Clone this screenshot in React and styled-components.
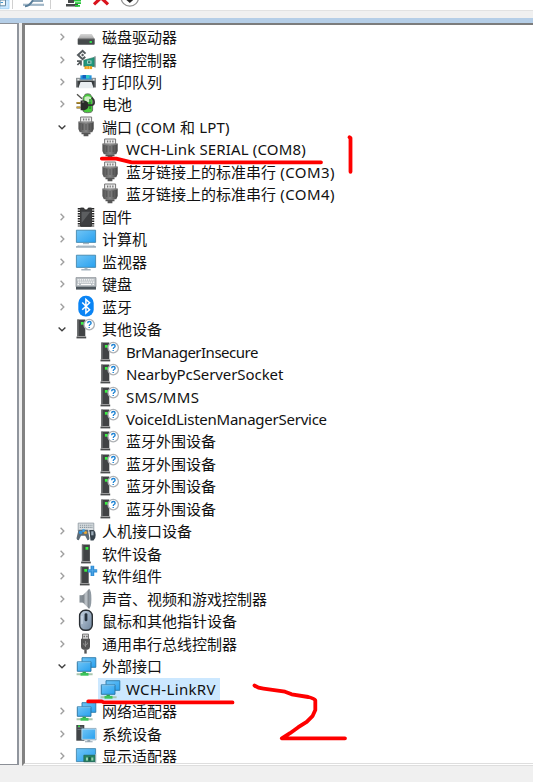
import React from 'react';
import styled, { createGlobalStyle } from 'styled-components';

const Global = createGlobalStyle`
  * { box-sizing: border-box; }
  body { margin: 0; background: #f0f0f0; }
`;

const Window = styled.div`
  position: relative;
  width: 533px;
  height: 782px;
  overflow: hidden;
  display: flex;
  flex-direction: column;
  background: #f0f0f0;
  font-family: 'Noto Sans', 'Noto Sans CJK SC', sans-serif;
  color: #111;
`;
const Toolbar = styled.div`
  height: 11px;
  flex: none;
  background: #fff;
  border-bottom: 1px solid #e2e2e2;
  overflow: hidden;
`;
const Strip = styled.div`
  height: 12px;
  flex: none;
  background: #f0f0f0;
  border-bottom: 5px solid #b5cee7;
`;
const Panes = styled.div`
  display: flex;
  height: 743px;
  flex: none;
  background: #f0f0f0;
`;
const SidePane = styled.div`
  width: 19px;
  height: 742px;
  background: #fff;
  border-top: 1px solid #8b8f96;
  border-right: 2px solid #90959d;
  border-bottom: 1px solid #8b8f96;
`;
const TreePane = styled.div`
  flex: 1;
  margin-left: 3px;
  height: 743px;
  background: #fff;
  border-left: 3px solid #828282;
  border-top: 2px solid #7c7c7c;
  border-bottom: 3px double #dedede;
  overflow: hidden;
  padding-top: 0.8px;
`;
const Row = styled.div`
  display: flex;
  align-items: center;
  height: 22.48px;
  padding-left: ${p => (p.$child ? 73 : 31)}px;
`;
const Chevron = styled.svg`
  width: 12px;
  height: 12px;
  flex: none;
  margin-right: 6px;
  fill: none;
  stroke: ${p => (p.$open ? '#404040' : '#a0a0a0')};
  stroke-width: 1.4;
`;
const Item = styled.div`
  display: flex;
  align-items: center;
  height: 22px;
  padding: 0 4px 0 1px;
  background: ${p => (p.$selected ? '#cce8ff' : 'transparent')};
`;
const Glyph = styled.svg`
  width: 22px;
  height: 22px;
  flex: none;
  margin-right: 5px;
  overflow: visible;
`;
const Label = styled.span`
  font-size: 15px;
  line-height: 22px;
  white-space: pre;
  font-family: 'Noto Sans CJK SC', sans-serif;
`;
const Latin = styled.span`
  font-family: 'Noto Sans', sans-serif;
  font-size: 15px;
  letter-spacing: ${p => p.$track || 0}px;
`;
const Ink = styled.svg`
  position: absolute;
  left: 0;
  top: 0;
  pointer-events: none;
  fill: none;
  stroke: #fe0000;
  stroke-width: 3.8;
  stroke-linecap: round;
  stroke-linejoin: round;
`;

const Defs = () => (
  <defs>
    <linearGradient id="screen" x1="0" y1="0" x2="1" y2="1">
      <stop offset="0" stopColor="#71c5f6" /><stop offset="1" stopColor="#27a0ef" />
    </linearGradient>
    <linearGradient id="metal" x1="0" y1="0" x2="1" y2="0">
      <stop offset="0" stopColor="#505050" /><stop offset=".5" stopColor="#858585" /><stop offset="1" stopColor="#444" />
    </linearGradient>
    <linearGradient id="cone" x1="0" y1="0" x2="1" y2="0">
      <stop offset="0" stopColor="#6e767d" /><stop offset=".5" stopColor="#c4cacf" /><stop offset="1" stopColor="#737b82" />
    </linearGradient>
    <linearGradient id="mouse" x1="0" y1="0" x2="1" y2="1">
      <stop offset="0" stopColor="#c5d3e2" /><stop offset="1" stopColor="#6e849c" />
    </linearGradient>
    <linearGradient id="lid" x1="0" y1="0" x2="0" y2="1">
      <stop offset="0" stopColor="#d8d8d8" /><stop offset="1" stopColor="#a5a5a5" />
    </linearGradient>
  </defs>
);

const Tower = ({ x = 1.5 }) => (
  <g transform={`translate(${x} 0)`}>
    <path d="M.8 1.5h8v17h-8z" fill="#414345" />
    <path d="M.8 1.5h1.4v17H.8z" fill="#6d6f70" />
    <path d="M0 18.6h9.7v1.8H0z" fill="#4b4d4e" />
    <path d="M1 18h7.6v.7H1z" fill="#aaa" />
    <path d="M4.4 4h2.8v2.7H4.4z" fill="#39f043" />
  </g>
);

const TwoScreens = () => (
  <g>
    <path d="M7 2.7h13.8v9.6H7z" fill="url(#screen)" stroke="#2878a8" strokeWidth=".9" />
    <path d="M2.3 6.8H16v9.5H2.3z" fill="url(#screen)" stroke="#286f9d" strokeWidth=".9" />
    <path d="M2.7 7.2h13" stroke="#a5dcfa" strokeWidth=".6" />
    <path d="M7.5 16.8h3.4v1.4H7.5z" fill="#25a449" />
    <path d="M1.6 18.3h5.2v2H1.6zM12.4 18.3h5.2v2h-5.2z" fill="#a9c6ae" />
    <path d="M5.5 17.9h8v2.8h-8z" fill="#3cc35a" />
  </g>
);

const art = {
  disk: (
    <g>
      <path d="M5.6 8h11.2l2.8 5H2.8z" fill="url(#lid)" />
      <path d="M2.7 12.8h17v5.2q0 .7-.8.7H3.5q-.8 0-.8-.7z" fill="#45494b" />
      <path d="M3 13h16.4" stroke="#777" strokeWidth=".7" />
      <path d="M14.6 15h2.3v2h-2.3z" fill="#35e14e" />
    </g>
  ),
  storage: (
    <g>
      <path d="M10.5 4.6 7.6 1.8 3 6l4.6 4.2 2.6-2.4" fill="none" stroke="#555b5e" strokeWidth="2" />
      <path d="m7.6 4.4 1.6 1.6-1.6 1.5L6 6z" fill="#555b5e" />
      <path d="M2 12.2h4v4.2M5.6 12.6 2.4 16" fill="none" stroke="#555b5e" strokeWidth="1.7" />
      <path d="M20 7.3v11.2" stroke="#8b9598" strokeWidth="1.5" />
      <path d="m8.8 11.2 10.4-2.8v9H8.8z" fill="#23977d" stroke="#176c58" strokeWidth=".6" />
      <path d="M12 11.5h4.5v3.2H12z" fill="#a2d9c9" />
      <path d="M13 12.3h2.4v1.6H13z" fill="#33685c" />
      <path d="M9.5 17.2h7.6v2.9H9.5z" fill="#f0a019" />
      <path d="M12 17v3M14.5 17v3" stroke="#ffe18a" strokeWidth=".6" />
    </g>
  ),
  printer: (
    <g>
      <path d="M1.2 7h19.6v9.5H1.2z" fill="#5a5e61" />
      <path d="M1.2 6.8h19.6v3H1.2z" fill="#909698" />
      <path d="M5.4 4.3h11.2v4.2H5.4z" fill="#2794dc" />
      <path d="M7.5 4h3.5v3.4H7.5z" fill="#1360bd" /><path d="M11 4h3.4v3.4H11z" fill="#31c8c0" />
      <path d="M2.4 8.8h2M18 8.8h1.5" stroke="#fff" strokeWidth="1" />
      <path d="M3.2 10h15.6v6.8H3.2z" fill="#34383a" />
      <path d="M5.5 11h11l2.2 6.2H3.3z" fill="#e9edf0" />
    </g>
  ),
  battery: (
    <g>
      <path d="M9.5 2.5Q9.5.8 12.7.8T16 2.5l1.6 2.1V17q0 2.7-5 2.7T8 17V4.5z" fill="#49cb3d" stroke="#626762" strokeWidth=".9" />
      <path d="M9.5 4.5q3-2.6 6.5 0V9H9.5z" fill="#cbeec2" />
      <path d="M15 6v10" stroke="#238b28" strokeWidth="1.5" />
      <path d="M2 1.2 7 5.8" stroke="#51514d" strokeWidth="1.3" />
      <path d="M1.5 10h4M1.5 14.6h4" stroke="#6d5b28" strokeWidth="2" />
      <path d="M1.8 9.8h3.6M1.8 14.4h3.6" stroke="#d4a934" strokeWidth="1" />
      <path d="M5.6 7.6h3.6q4.4.8 4.4 4.6t-4.4 5H5.6z" fill="#292b29" />
      <path d="M12.6 12.2h4.4q3-1 1.7-5.3l-2-2.2" fill="none" stroke="#333" strokeWidth="1.8" />
      <path d="M7 9h2.2" stroke="#93948f" strokeWidth=".9" />
    </g>
  ),
  port: (
    <g>
      <path d="M5.6 6V1h11v5" fill="#ededed" stroke="#777" strokeWidth="1" />
      <path d="M8 2.5h1.3v2H8zM10.6 2.5h1.2v2h-1.2zM13.2 2.5h1.3v2h-1.3z" fill="#777" />
      <path d="M3.4 5.5h15.3v7.6l-1.4 3.2H4.8l-1.4-3.2z" fill="url(#metal)" />
      <path d="M4.2 6.1h13.6" stroke="#a5a5a5" strokeWidth=".8" />
      <path d="M7.8 8v6M11 8v6M14.2 8v6" stroke="#4a4a4a" strokeWidth=".8" />
      <path d="M6.5 16.2h9v2h-9zM8.6 18h4.8v2.2H8.6z" fill="#555" />
    </g>
  ),
  chip: (
    <g>
      <path d="M3.9 2v18.6M18.1 2v18.6" stroke="#292929" strokeWidth="2.3" strokeDasharray="1.6 .9" />
      <path d="M5.5 2h3.2q.3 2 2.3 2t2.3-2h3.2v18.4h-11z" fill="#3d3e40" stroke="#222" strokeWidth=".8" />
      <path d="M6.6 5.8h8.7L6.6 17z" fill="#5c5e60" />
    </g>
  ),
  computer: (
    <g>
      <path d="M1.4 2.2h19.2v12.2H1.4z" fill="url(#screen)" stroke="#397da4" strokeWidth=".8" />
      <path d="M8 15h6v1.2H8z" fill="#a9b8c3" />
      <path d="M4 17.2h14l3 1v1.5H1v-1.5z" fill="#9fb0bd" /><path d="M4 17.6h14" stroke="#d9e2e9" />
    </g>
  ),
  monitor: (
    <g>
      <path d="M1.4 4.2h19.2v12.2H1.4z" fill="url(#screen)" stroke="#397da4" strokeWidth=".8" />
      <path d="M9.5 16.8h3v1.5h-3z" fill="#a9b8c3" /><path d="M6.3 18.2h9.4v1.2H6.3z" fill="#8ea0ae" />
    </g>
  ),
  keyboard: (
    <g>
      <path d="M1 4.6h20v9.2H1z" fill="#b9bfc4" stroke="#858b90" strokeWidth=".7" />
      <path d="M1 13.8h20v2.8H1z" fill="#4c555c" />
      <path d="M2.5 6.8h17M3 9.1h17M2.5 11.4h2M17.5 11.4h2" stroke="#fff" strokeWidth="1.2" strokeDasharray="1.4 .7" />
      <path d="M6 11.4h10" stroke="#fff" strokeWidth="1.1" />
    </g>
  ),
  bluetooth: (
    <g>
      <rect x="3.3" y="-.2" width="15.4" height="20.8" rx="7.2" fill="#0a84f4" />
      <path d="m7.2 6.5 7.4 7.2-3.7 3.4V3.4l3.7 3.4-7.4 7" fill="none" stroke="#fff" strokeWidth="1.5" />
    </g>
  ),
  unknown: (
    <g>
      <Tower />
      <circle cx="14.2" cy="6.6" r="5.2" fill="#fff" stroke="#aeb1b4" strokeWidth="1.3" />
      <path d="M12.6 5.2q.1-1.7 1.8-1.7t1.7 1.5q0 .9-1 1.5-.8.5-.8 1.4M14.2 8.9v1.2" fill="none" stroke="#1d83d4" strokeWidth="1.4" />
    </g>
  ),
  hid: (
    <g>
      <path d="M3.2 3.1h15.6v8H3.2z" fill="#d9dee1" stroke="#8b969e" strokeWidth=".8" />
      <path d="M4.8 5.2h13M4.8 7.4h13" stroke="#87939b" strokeWidth="1.1" strokeDasharray="1.3 .8" />
      <path d="M3.5 9.7h9.3l1.7 8.5q-.2 2.2-2 2l-2.3-4.4H6l-2.2 4.4q-2.2 0-2.3-2z" fill="#5e6c77" />
      <path d="M14.4 10h4.1q2.2 1.2 2.2 5t-2.2 5.4h-3z" fill="#35424c" />
      <path d="M16.2 11.3h2.3v4h-2.3z" fill="#9dadba" />
      <circle cx="5.6" cy="12.5" r="1.7" fill="#2f91d9" /><circle cx="10.5" cy="12.5" r="1.6" fill="#e7a735" />
      <path d="M7.3 9.3h2.5V12H7.3z" fill="#3aa0e5" />
    </g>
  ),
  software: <Tower x={6.1} />,
  component: (
    <g>
      <Tower x={4.9} />
      <path d="M15.6.8h3.6v3.4h3v3.3h-3V11h-3.6V7.5h-2.8V4.2h2.8z" fill="#2e8dd6" />
      <path d="M17.4 1.2v9.3M13.2 5.8h8.6" stroke="#65b5ed" strokeWidth=".6" />
    </g>
  ),
  speaker: (
    <g>
      <path d="M4.5 7.2h4v7.4h-4z" fill="#858e95" />
      <path d="m7.8 7.2 6.4-6.5v20.2L7.8 14.6z" fill="url(#cone)" />
      <path d="M14 .8q2.4 1.2 2.4 10T14 20.7z" fill="#909aa2" />
    </g>
  ),
  mouse: (
    <g>
      <rect x="4.6" y=".3" width="12.7" height="20" rx="5.6" fill="url(#mouse)" stroke="#292e33" strokeWidth="1.4" />
      <path d="M7 6v8" stroke="#e0eaf4" strokeWidth=".8" />
      <rect x="9.6" y="3.2" width="2.8" height="8" rx="1.3" fill="#26313c" />
    </g>
  ),
  usb: (
    <g>
      <path d="M7.5 6.2V1.1h6v5.1" fill="#d7d7d7" stroke="#777" strokeWidth="1" />
      <path d="M8.6 2.7h1.2v1.6H8.6zM11.3 2.7h1.2v1.6h-1.2z" fill="#555" />
      <path d="M6 5.8h9v7.4q0 3-2.6 3.5H8.6Q6 16.2 6 13.2z" fill="#555" />
      <path d="M9.3 16.4h2.4v4.2H9.3z" fill="#555" />
      <path d="M10.5 8v6M8.7 10.1v1.5l1.8 1M12.3 9.5v1.6l-1.8 1" fill="none" stroke="#aaa" strokeWidth=".6" />
    </g>
  ),
  network: <TwoScreens />,
  system: (
    <g>
      <path d="M1.3 2h8v15.7h-8z" fill="#414548" />
      <path d="M2.5 4.2h5.5M2.5 6.4h5.5" stroke="#889096" strokeWidth=".7" /><path d="M3 2.5h2v1.4H3z" fill="#3edb4b" />
      <path d="M6.8 5.9h13.8v10.5H6.8z" fill="url(#screen)" stroke="#d9e8f2" strokeWidth="1" />
      <path d="M6.3 5.4h14.8v11.5H6.3z" fill="none" stroke="#4b7895" strokeWidth=".5" />
      <path d="M12.4 17h2.8v1.3h-2.8zM10 18.2h7.6v1H10z" fill="#93a4b1" />
    </g>
  ),
  display: (
    <g>
      <path d="M1.4 3.6h19.2v13H1.4z" fill="url(#screen)" stroke="#397da4" strokeWidth=".8" />
      <path d="M8.8 10.2h11.5v6.6H8.8z" fill="#278261" stroke="#245c4a" strokeWidth=".6" />
      <path d="M11 12.4h2v3h-2zM16.3 12.4h2v3h-2z" fill="#95d3ac" /><path d="M13.6 12.2h2v3.3h-2z" fill="#1c4e3c" />
      <path d="M20.7 9v9" stroke="#abb8bd" strokeWidth="1" />
    </g>
  ),
};

const nodes = [
  ['disk', '磁盘驱动器'],
  ['storage', '存储控制器'],
  ['printer', '打印队列'],
  ['battery', '电池'],
  ['port', '端口 (COM 和 LPT)', { open: true, track: 0.2 }],
  ['port', 'WCH-Link SERIAL (COM8)', { child: true, track: 0.15 }],
  ['port', '蓝牙链接上的标准串行 (COM3)', { child: true, track: 0.4 }],
  ['port', '蓝牙链接上的标准串行 (COM4)', { child: true, track: 0.4 }],
  ['chip', '固件'],
  ['computer', '计算机'],
  ['monitor', '监视器'],
  ['keyboard', '键盘'],
  ['bluetooth', '蓝牙'],
  ['unknown', '其他设备', { open: true }],
  ['unknown', 'BrManagerInsecure', { child: true, track: -0.5 }],
  ['unknown', 'NearbyPcServerSocket', { child: true, track: -0.08 }],
  ['unknown', 'SMS/MMS', { child: true, track: 0.3 }],
  ['unknown', 'VoiceIdListenManagerService', { child: true, track: -0.24 }],
  ['unknown', '蓝牙外围设备', { child: true }],
  ['unknown', '蓝牙外围设备', { child: true }],
  ['unknown', '蓝牙外围设备', { child: true }],
  ['unknown', '蓝牙外围设备', { child: true }],
  ['hid', '人机接口设备'],
  ['software', '软件设备'],
  ['component', '软件组件'],
  ['speaker', '声音、视频和游戏控制器'],
  ['mouse', '鼠标和其他指针设备'],
  ['usb', '通用串行总线控制器'],
  ['network', '外部接口', { open: true }],
  ['network', 'WCH-LinkRV', { child: true, selected: true, track: 0.32 }],
  ['network', '网络适配器'],
  ['system', '系统设备'],
  ['display', '显示适配器'],
];

const Caption = ({ text, track }) => (
  <Label>
    {text.split(/([\x20-\x7e]+)/).filter(Boolean).map((part, i) =>
      /^[\x20-\x7e]/.test(part) ? <Latin key={i} $track={track}>{part}</Latin> : part
    )}
  </Label>
);

const TreeNode = ({ icon, text, open, child, selected, track }) => (
  <Row $child={child}>
    {!child && (
      <Chevron $open={open} viewBox="0 0 12 12">
        <path d={open ? 'M2.6 4.6 6 7.8l3.4-3.2' : 'm4.6 2.8 3.2 3.2-3.2 3.2'} />
      </Chevron>
    )}
    <Item $selected={selected}>
      <Glyph viewBox="0 0 22 22">{art[icon]}</Glyph>
      <Caption text={text} track={track} />
    </Item>
  </Row>
);

const ToolbarIcons = () => (
  <svg width="160" height="10" viewBox="0 0 160 10" display="block">
    <path d="M0 0h9v8.7H0z" fill="#cce8ff" stroke="#99cdf3" strokeWidth=".8" />
    <path d="M0 0h5.5v5.8H0z" fill="#f8fafb" stroke="#668aa5" strokeWidth="1" />
    <path d="M.5 2.5h2.5" stroke="#4595ca" />
    <path d="M12.5 0v9M50.5 0v9" stroke="#d0d0d0" />
    <path d="M23 4.8h21" stroke="#a0b6c7" strokeWidth="2.2" />
    <path d="M33 1h10" stroke="#6489a3" strokeWidth="1.5" />
    <path d="M25 6.2q4 .2 8-6" fill="none" stroke="#587d99" strokeWidth="2" />
    <path d="M68 0h6v3h-6zM66 4h12v2.4H66z" fill="#474b4b" />
    <path d="M74 .5h7M75 3.2h6M75 5.8h5" stroke="#28c63a" strokeWidth="1.8" />
    <path d="m94 4.3 7-6.5 7 6.5" fill="none" stroke="#d9141d" strokeWidth="3.2" />
    <circle cx="129.8" cy="-2.5" r="8.7" fill="#fff" stroke="#939393" strokeWidth="1.3" />
    <path d="M125.5-.8h8.6L129.8 3z" fill="#252525" />
  </svg>
);

export default function App() {
  return (
    <Window>
      <Global />
      <Toolbar><ToolbarIcons /></Toolbar>
      <Strip />
      <Panes>
        <SidePane />
        <TreePane>
          {nodes.map(([icon, text, state], i) => (
            <TreeNode key={i} icon={icon} text={text} {...state} />
          ))}
        </TreePane>
      </Panes>
      <Ink width="533" height="782" viewBox="0 0 533 782">
        <Defs />
        <path d="M101.8 158.6h14.5l15.4 3.7H321" />
        <path d="M349.5 137.3l1 .8v33.7" />
        <path d="M88.2 701.4h13.5l2 1H232.5" />
        <path d="M254.5 685.4q3 2.4 9 3.2L285 691.7l6.7 2.6 16.6 2.7q6 1.4 7 3.4V710l-2.6 5.8-6 6-8.4 5.4-8.3 6-8.2 5.1H345" />
      </Ink>
    </Window>
  );
}
